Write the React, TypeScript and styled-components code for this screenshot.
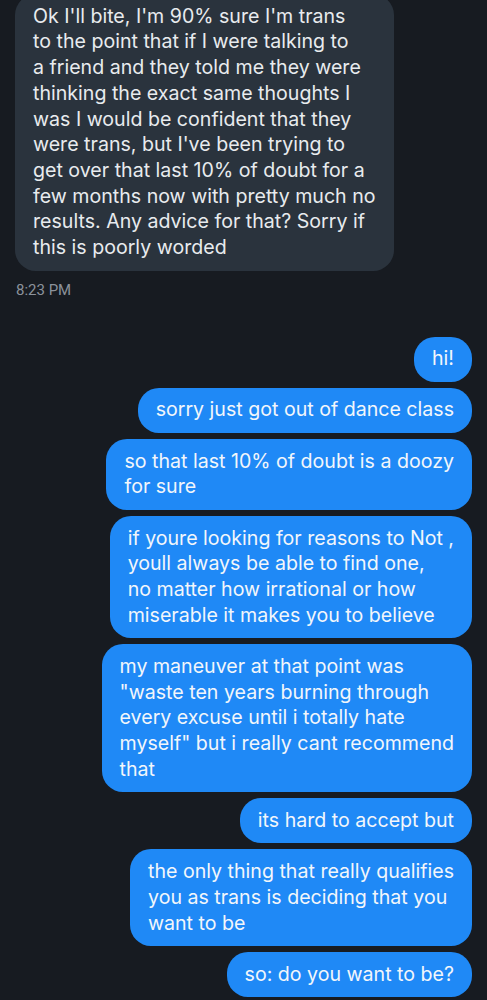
import React from "react";
import styled, { createGlobalStyle } from "styled-components";

const Global = createGlobalStyle`
  html, body { margin: 0; padding: 0; background: #171b21; }
  body { overflow: hidden; }
`;

const Page = styled.div`
  width: 487px;
  height: 1000px;
  background: #171b21;
  display: flex;
  flex-direction: column;
  font-family: Inter, "Noto Sans", sans-serif;
  overflow: hidden;
`;

const Bubble = styled.div<{ $mine?: boolean }>`
  align-self: ${(p) => (p.$mine ? "flex-end" : "flex-start")};
  margin: ${(p) => (p.$mine ? "0 15px 6px 0" : "-6px 0 0 15px")};
  background: ${(p) => (p.$mine ? "#1f89f6" : "#2a333d")};
  color: ${(p) => (p.$mine ? "#f2f6fb" : "#e8ebee")};
  border-radius: 21px;
  padding: 9.75px 18px;
  font-size: 19.6px;
  line-height: 25.7px;
  white-space: nowrap;
`;

const Line = styled.div``;

const Time = styled.div`
  margin: 10px 0 38px 16px;
  font-family: Roboto, "Noto Sans", sans-serif;
  font-size: 15px;
  color: #8b929b;
  line-height: 18px;
`;

const incoming = [
  "Ok I'll bite, I'm 90% sure I'm trans",
  "to the point that if I were talking to",
  "a friend and they told me they were",
  "thinking the exact same thoughts I",
  "was I would be confident that they",
  "were trans, but I've been trying to",
  "get over that last 10% of doubt for a",
  "few months now with pretty much no",
  "results. Any advice for that? Sorry if",
  "this is poorly worded",
];

const outgoing: string[][] = [
  ["hi!"],
  ["sorry just got out of dance class"],
  ["so that last 10% of doubt is a doozy", "for sure"],
  [
    "if youre looking for reasons to Not ,",
    "youll always be able to find one,",
    "no matter how irrational or how",
    "miserable it makes you to believe",
  ],
  [
    "my maneuver at that point was",
    "\"waste ten years burning through",
    "every excuse until i totally hate",
    "myself\" but i really cant recommend",
    "that",
  ],
  ["its hard to accept but"],
  [
    "the only thing that really qualifies",
    "you as trans is deciding that you",
    "want to be",
  ],
  ["so: do you want to be?"],
];

export default function App() {
  return (
    <Page>
      <Global />
      <Bubble>
        {incoming.map((l, i) => (
          <Line key={i}>{l}</Line>
        ))}
      </Bubble>
      <Time>8:23 PM</Time>
      {outgoing.map((lines, i) => (
        <Bubble $mine key={i}>
          {lines.map((l, j) => (
            <Line key={j}>{l}</Line>
          ))}
        </Bubble>
      ))}
    </Page>
  );
}
